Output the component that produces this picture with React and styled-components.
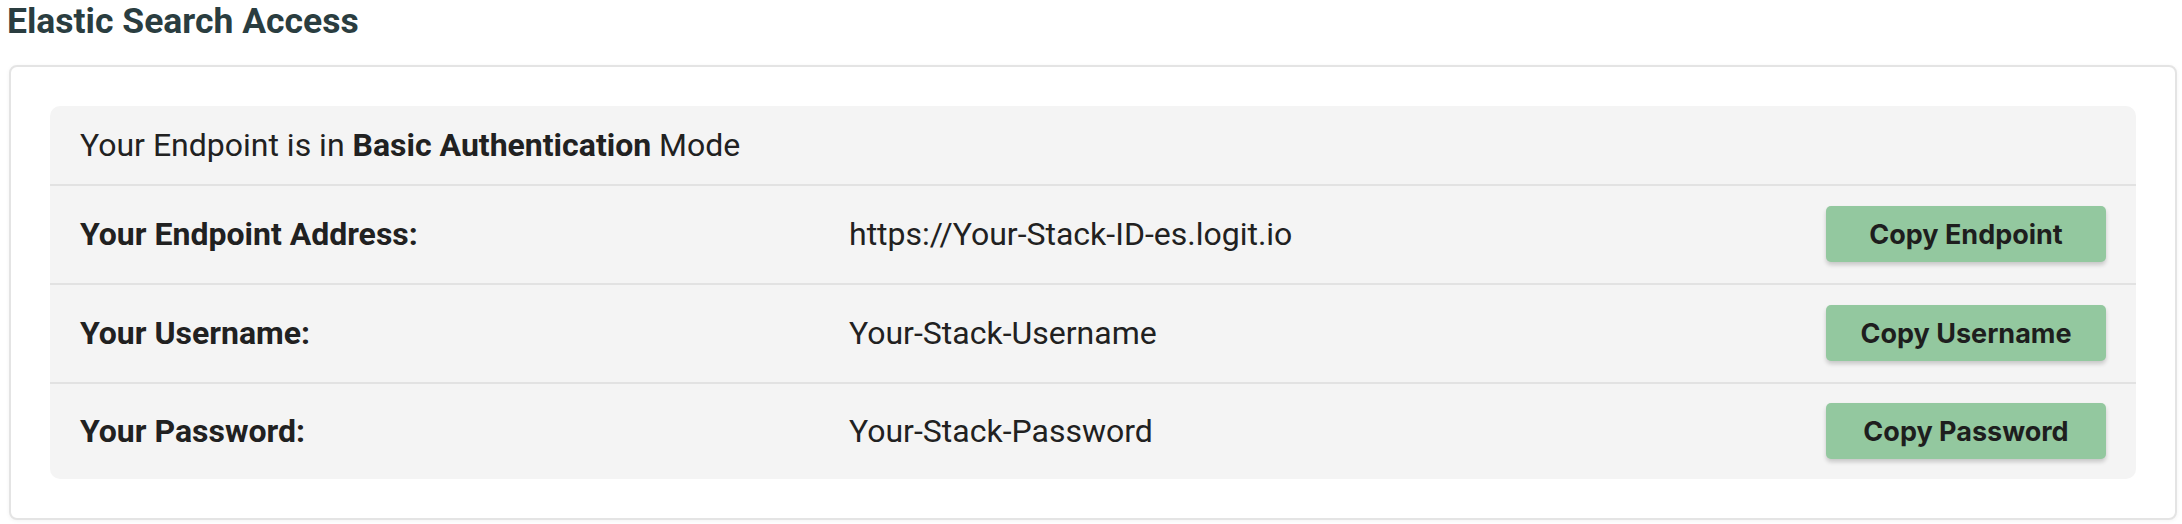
import React from 'react';
import styled, { createGlobalStyle } from 'styled-components';

const GlobalStyle = createGlobalStyle`
  html, body {
    margin: 0;
    padding: 0;
    background: #fff;
  }
  body {
    font-family: Roboto, 'Liberation Sans', sans-serif;
    color: #212121;
  }
`;

const Page = styled.div`
  padding: 1px 5px 6px 7px;
`;

const Title = styled.h2`
  margin: 0 0 23px;
  font-size: 35.5px;
  line-height: 41px;
  font-weight: 700;
  color: #2a3d40;
`;

const Card = styled.div`
  margin-left: 2px;
  border: 2px solid #e4e4e4;
  border-radius: 8px;
  box-shadow: 0 1px 4px rgba(0, 0, 0, 0.05);
  padding: 39px;
  background: #fff;
`;

const Panel = styled.div`
  background: #f4f4f4;
  border-radius: 10px;
`;

const Header = styled.div`
  height: 78px;
  display: flex;
  align-items: center;
  padding: 0 30px;
  font-size: 32px;
`;

const Row = styled.div`
  display: grid;
  grid-template-columns: 769px 1fr auto;
  align-items: center;
  border-top: 2px solid #e2e2e2;
  padding: ${({ $last }) => ($last ? '19px 30px 20px' : '20px 30px 21px')};
  font-size: 32px;
`;

const Label = styled.div`
  font-weight: 700;
`;

const Value = styled.div`
  font-weight: 400;
`;

const CopyButton = styled.button`
  width: 280px;
  height: 56px;
  border: 0;
  border-radius: 5px;
  background: #93c89f;
  color: #1e1e1e;
  font-family: Inter, 'Noto Sans', sans-serif;
  font-weight: 700;
  font-size: 27px;
  box-shadow: 0 3px 4px rgba(0, 0, 0, 0.18);
  cursor: pointer;
`;

const rows = [
  { label: 'Your Endpoint Address:', value: 'https://Your-Stack-ID-es.logit.io', button: 'Copy Endpoint' },
  { label: 'Your Username:', value: 'Your-Stack-Username', button: 'Copy Username' },
  { label: 'Your Password:', value: 'Your-Stack-Password', button: 'Copy Password' },
];

const App = () => (
  <>
    <GlobalStyle />
    <Page>
      <Title>Elastic Search Access</Title>
      <Card>
        <Panel>
          <Header>
            <span>
              Your Endpoint is in <b>Basic Authentication</b> Mode
            </span>
          </Header>
          {rows.map((row, i) => (
            <Row key={row.label} $last={i === rows.length - 1}>
              <Label>{row.label}</Label>
              <Value>{row.value}</Value>
              <div>
                <CopyButton>{row.button}</CopyButton>
              </div>
            </Row>
          ))}
        </Panel>
      </Card>
    </Page>
  </>
);

export default App;
